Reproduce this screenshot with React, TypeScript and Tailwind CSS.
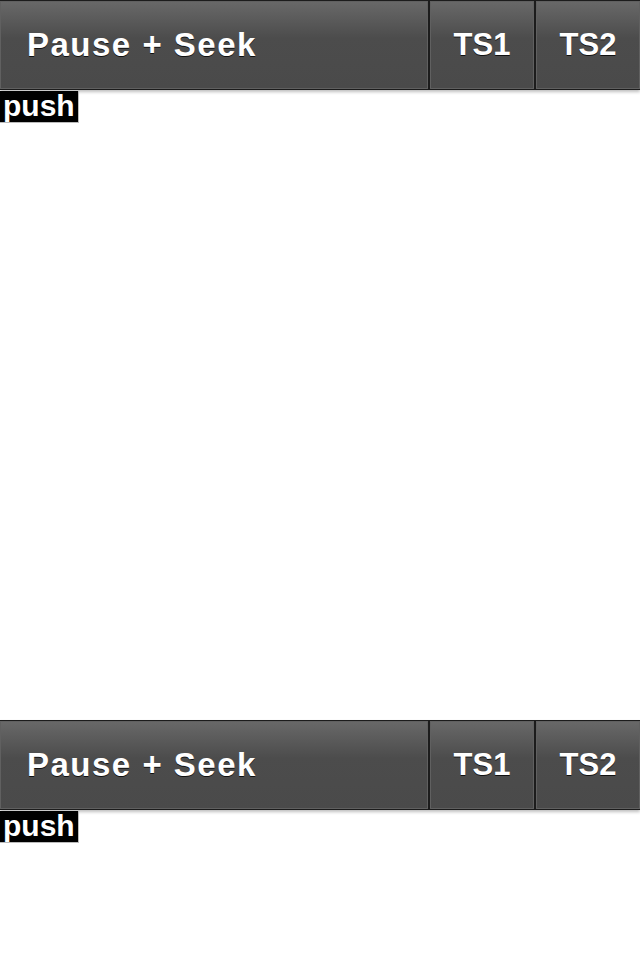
const tabs = ["TS1", "TS2"];

function Bar() {
  return (
    <div className="flex h-[90px] gap-[2px] bg-[#1c1c1c] py-[1px] shadow-[0_2px_3px_rgba(0,0,0,0.25)]">
      <div className="flex w-[428px] items-center border border-[#606060] bg-[linear-gradient(180deg,#686868_0%,#4c4c4c_42%,#4a4a4a_100%)] pl-[26px]">
        <span className="text-[33px] font-bold tracking-[1.5px] text-white [text-shadow:0_1px_0_#111]">
          Pause + Seek
        </span>
      </div>
      {tabs.map((t) => (
        <div
          key={t}
          className="flex flex-1 items-center justify-center border border-[#606060] bg-[linear-gradient(180deg,#686868_0%,#4c4c4c_42%,#4a4a4a_100%)]"
        >
          <span className="text-[31px] font-bold text-white [text-shadow:0_1px_0_#111]">
            {t}
          </span>
        </div>
      ))}
    </div>
  );
}

function Block({ tall }: { tall?: boolean }) {
  return (
    <section className={tall ? "h-[720px]" : ""}>
      <Bar />
      <span className="mt-[1px] inline-block h-[32px] border-r border-b border-[#bbbbbb] bg-black px-[3px] text-[30px] leading-[30px] font-bold text-white">
        push
      </span>
    </section>
  );
}

export default function App() {
  return (
    <div className="min-h-[960px] bg-white font-['Liberation_Sans',Arial,sans-serif]">
      <Block tall />
      <Block />
    </div>
  );
}
